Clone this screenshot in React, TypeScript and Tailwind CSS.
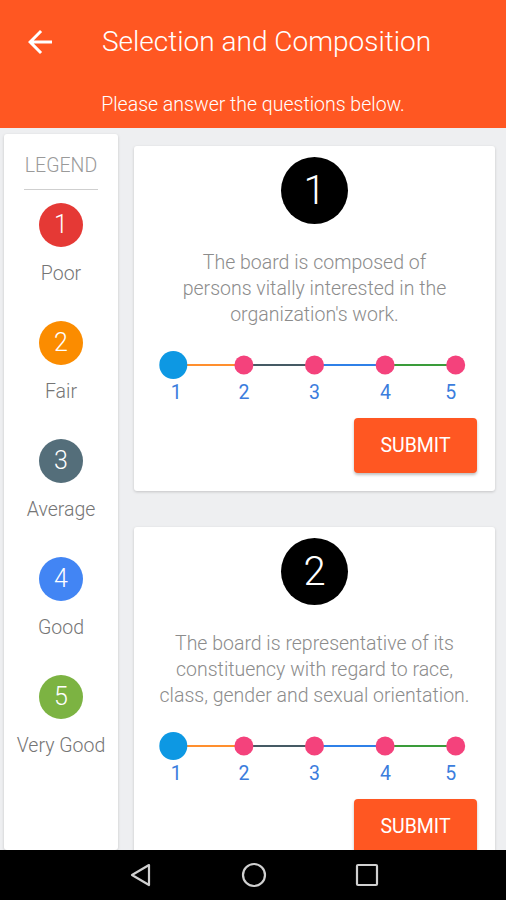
import React from "react";

const legend = [
  { n: 1, label: "Poor", bg: "bg-[#e53935]" },
  { n: 2, label: "Fair", bg: "bg-[#fb8c00]" },
  { n: 3, label: "Average", bg: "bg-[#546e7a]" },
  { n: 4, label: "Good", bg: "bg-[#4285f4]" },
  { n: 5, label: "Very Good", bg: "bg-[#7cb342]" },
];

const questions = [
  {
    n: 1,
    lines: ["The board is composed of", "persons vitally interested in the", "organization's work."],
  },
  {
    n: 2,
    lines: [
      "The board is representative of its",
      "constituency with regard to race,",
      "class, gender and sexual orientation.",
    ],
  },
];

const labelPad = ["pl-[6px]", "", "", "pl-[1px]", "pr-[10px]"];

function Track() {
  const xs = [35.3, 105.9, 176.5, 247.1, 317.7];
  const colors = ["#ff8f2e", "#455a64", "#2f80e8", "#3a9c3a"];
  return (
    <svg width="353" height="30" viewBox="0 0 353 30" className="block">
      {colors.map((c, i) => (
        <line key={i} x1={xs[i]} y1={15} x2={xs[i + 1]} y2={15} stroke={c} strokeWidth={2} />
      ))}
      {xs.slice(1).map((x, i) => (
        <circle key={i} cx={x} cy={15} r={9.5} fill="#f4427c" />
      ))}
      <circle cx={xs[0]} cy={15} r={14} fill="#0d98e3" />
    </svg>
  );
}

function QuestionCard({ n, lines }: { n: number; lines: string[] }) {
  return (
    <div className="bg-white rounded-[3px] shadow-[0_1px_3px_rgba(0,0,0,0.18)] pt-[11px] pb-[18px] px-[4px] flex flex-col shrink-0">
      <div className="mx-auto w-[67px] h-[67px] rounded-full bg-black flex items-center justify-center text-white text-[40px] font-light leading-none">
        {n}
      </div>
      <div className="mt-[26px] text-center text-[19.5px] leading-[26px] font-light text-[#8c8c8c] whitespace-nowrap">
        {lines.map((l, i) => (
          <div key={i}>{l}</div>
        ))}
      </div>
      <div className="mt-[22px]">
        <Track />
      </div>
      <div className="grid grid-cols-5 mt-[1px] text-[19.5px] leading-[24px] text-[#3b7ddd] text-center">
        {[1, 2, 3, 4, 5].map((v, i) => (
          <div key={v} className={labelPad[i]}>
            {v}
          </div>
        ))}
      </div>
      <div className="flex justify-end mt-[13px] pr-[14px]">
        <div className="w-[123px] h-[55px] rounded-[4px] bg-[#ff5722] shadow-[0_2px_3px_rgba(0,0,0,0.25)] flex items-center justify-center text-white text-[19.5px]">
          SUBMIT
        </div>
      </div>
    </div>
  );
}

export default function App() {
  return (
    <div
      className="w-[506px] h-[900px] flex flex-col overflow-hidden bg-[#eeeff1]"
      style={{ fontFamily: "Roboto, 'Noto Sans', sans-serif" }}
    >
      <div className="h-[128px] bg-[#ff5722] flex flex-col shrink-0">
        <div className="h-[84px] flex items-center">
          <svg width="36" height="36" viewBox="0 0 24 24" className="ml-[22px]" fill="white">
            <path d="M20 11H7.83l5.59-5.59L12 4l-8 8 8 8 1.41-1.41L7.83 13H20v-2z" />
          </svg>
          <div className="ml-[44px] text-white text-[28px] font-light leading-none whitespace-nowrap">
            Selection and Composition
          </div>
        </div>
        <div className="h-[40px] pt-[2px] flex items-center justify-center text-white text-[19.5px] font-light">
          Please answer the questions below.
        </div>
      </div>

      <div className="flex-1 flex min-h-0 overflow-hidden pl-[4px]">
        <div className="w-[114px] mt-[6px] bg-white rounded-[3px] shadow-[0_1px_3px_rgba(0,0,0,0.18)] flex flex-col items-center pt-[20px] shrink-0">
          <div className="text-[19.5px] leading-[24px] font-light text-[#9a9a9a]">LEGEND</div>
          <div className="w-[74px] h-px bg-[#cfcfcf] mt-[11px]" />
          <div className="flex flex-col items-center mt-[13px]">
            {legend.map((it) => (
              <div key={it.n} className="flex flex-col items-center h-[118px]">
                <div
                  className={`w-[44px] h-[44px] rounded-full ${it.bg} flex items-center justify-center text-white text-[25px] font-light`}
                >
                  {it.n}
                </div>
                <div className="mt-[15px] text-[19.5px] leading-[24px] font-light text-[#757575] whitespace-nowrap">
                  {it.label}
                </div>
              </div>
            ))}
          </div>
        </div>

        <div className="ml-[16px] w-[361px] mt-[18px] flex flex-col gap-[36px]">
          {questions.map((q) => (
            <QuestionCard key={q.n} n={q.n} lines={q.lines} />
          ))}
        </div>
      </div>

      <div className="h-[50px] bg-black shrink-0 flex items-center">
        <svg width="24" height="26" viewBox="0 0 24 26" className="ml-[129px]">
          <path d="M20 3 L3 13 L20 23 Z" fill="none" stroke="#d0d0d0" strokeWidth="2.2" strokeLinejoin="round" />
        </svg>
        <svg width="26" height="26" viewBox="0 0 26 26" className="ml-[88px]">
          <circle cx="13" cy="13" r="11" fill="none" stroke="#d0d0d0" strokeWidth="2.2" />
        </svg>
        <svg width="24" height="24" viewBox="0 0 24 24" className="ml-[88px]">
          <rect x="2" y="2" width="20" height="20" rx="1" fill="none" stroke="#d0d0d0" strokeWidth="2.2" />
        </svg>
      </div>
    </div>
  );
}
